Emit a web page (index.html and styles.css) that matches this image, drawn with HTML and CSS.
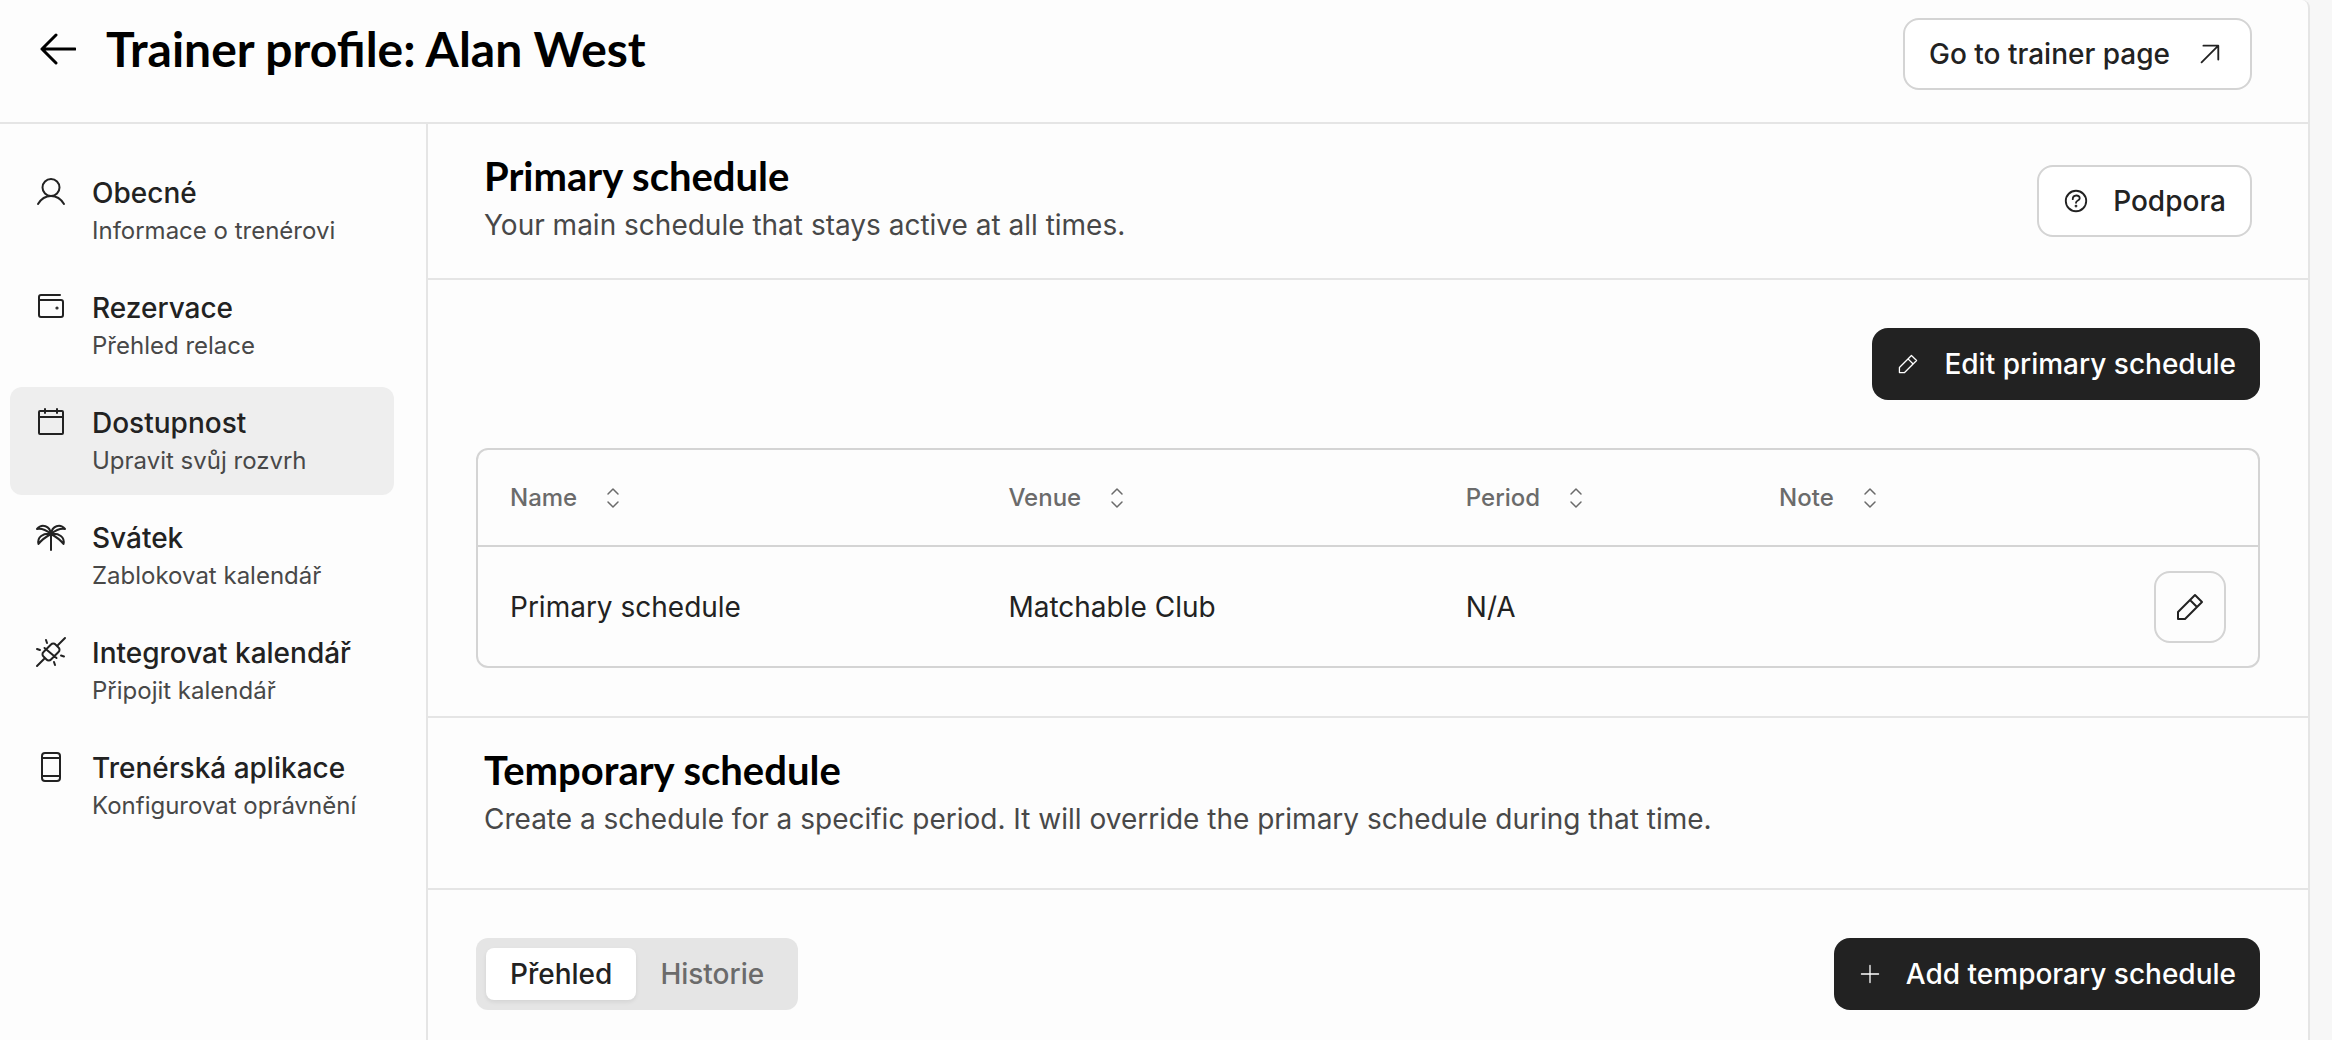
FILE: index.html
```html
<!DOCTYPE html>
<html lang="cs">
<head>
  <meta charset="UTF-8">
  <meta name="viewport" content="width=device-width, initial-scale=1.0">
  <title>Trainer profile</title>
  <link rel="stylesheet" href="styles.css">
</head>
<body>

<div class="panel">
  <header class="page-header">
    <div class="page-title">
      <button class="back" type="button" aria-label="Back">
        <svg class="icon-back" viewBox="0 0 36 32"><path d="M16 2 2 16l14 14M2 16h33"/></svg>
      </button>
      <h1>Trainer profile: Alan West</h1>
    </div>
    <a class="btn btn-trailing" href="#">
      Go to trainer page
      <svg class="icon" viewBox="0 0 28 28"><path d="M8 5h16v15M24 5 6 23"/></svg>
    </a>
  </header>

  <div class="layout">
    <nav class="sidebar">
      <a class="nav-item" href="#">
        <svg class="nav-icon" viewBox="0 0 32 32"><circle cx="16" cy="11.5" r="8.5"/><path d="M3 28c3-5 7-8 13-8s10 3 13 8"/></svg>
        <span class="nav-text"><span class="nav-title">Obecné</span><span class="nav-sub">Informace o trenérovi</span></span>
      </a>
      <a class="nav-item" href="#">
        <svg class="nav-icon" viewBox="0 0 32 32"><path d="M25 4H6a2 2 0 0 0-2 2v18a2 2 0 0 0 2 2h20a2 2 0 0 0 2-2V11a2 2 0 0 0-2-2H4"/><circle class="dot" cx="22" cy="17" r=".6"/></svg>
        <span class="nav-text"><span class="nav-title">Rezervace</span><span class="nav-sub">Přehled relace</span></span>
      </a>
      <a class="nav-item active" href="#">
        <svg class="nav-icon" viewBox="0 0 32 32"><rect x="4" y="5" width="24" height="23" rx="1"/><path d="M4 11h24M10 3v4M22 3v4"/></svg>
        <span class="nav-text"><span class="nav-title">Dostupnost</span><span class="nav-sub">Upravit svůj rozvrh</span></span>
      </a>
      <a class="nav-item" href="#">
        <svg class="nav-icon" viewBox="0 0 32 32"><path d="M16 13v16M16 13C15 5 7 2 2 8c5-1 9 1 14 5ZM16 13c1-8 9-11 14-5-5-1-9 1-14 5ZM16 13C8 12 2 16 3.500 23c3-4 7-7 12.500-10ZM16 13c8-1 14 3 12.500 10-3-4-7-7-12.500-10Z"/></svg>
        <span class="nav-text"><span class="nav-title">Svátek</span><span class="nav-sub">Zablokovat kalendář</span></span>
      </a>
      <a class="nav-item" href="#">
        <svg class="nav-icon" viewBox="0 0 32 32"><path d="M2 30l7-7M23 9l7-7M11 13.500l-2.500 2.500a3 3 0 0 0 0 4.500l3 3a3 3 0 0 0 4.500 0l7.500-7.500a3 3 0 0 0 0-4.500l-3-3a3 3 0 0 0-4.500 0ZM9.500 12 21.500 22M11 4l1 3M2 13l3 1M26 19.500l3 1M19 26l1 3"/></svg>
        <span class="nav-text"><span class="nav-title">Integrovat kalendář</span><span class="nav-sub">Připojit kalendář</span></span>
      </a>
      <a class="nav-item" href="#">
        <svg class="nav-icon" viewBox="0 0 32 32"><rect x="7" y="2" width="18" height="28" rx="3"/><path d="M7 7h18M7 25h18"/></svg>
        <span class="nav-text"><span class="nav-title">Trenérská aplikace</span><span class="nav-sub">Konfigurovat oprávnění</span></span>
      </a>
    </nav>

    <main class="content">
      <section class="section-head">
        <div>
          <h2>Primary schedule</h2>
          <p>Your main schedule that stays active at all times.</p>
        </div>
        <button class="btn" type="button">
          <svg class="icon" viewBox="0 0 28 28"><circle cx="14" cy="14" r="11"/><path d="M10.500 12c0-5 7.500-5 7.500-1 0 3-4 2-4 5"/><circle class="dot" cx="14" cy="19.500" r=".5"/></svg>
          Podpora
        </button>
      </section>

      <section class="section-body">
        <div class="actions actions-end">
          <button class="btn btn-dark" type="button">
            <svg class="icon" viewBox="0 0 28 28"><path d="M4 18 18 4l6 6-14 14H4ZM14 8l6 6"/></svg>
            Edit primary schedule
          </button>
        </div>

        <div class="table-wrap">
          <table>
            <colgroup>
              <col class="col-name">
              <col class="col-venue">
              <col class="col-period">
              <col>
              <col class="col-edit">
            </colgroup>
            <thead>
              <tr>
                <th><button class="sort" type="button">Name <svg class="icon-sort" viewBox="0 0 24 24"><path d="m7 8 5-5 5 5M7 16l5 5 5-5"/></svg></button></th>
                <th><button class="sort" type="button">Venue <svg class="icon-sort" viewBox="0 0 24 24"><path d="m7 8 5-5 5 5M7 16l5 5 5-5"/></svg></button></th>
                <th><button class="sort" type="button">Period <svg class="icon-sort" viewBox="0 0 24 24"><path d="m7 8 5-5 5 5M7 16l5 5 5-5"/></svg></button></th>
                <th><button class="sort" type="button">Note <svg class="icon-sort" viewBox="0 0 24 24"><path d="m7 8 5-5 5 5M7 16l5 5 5-5"/></svg></button></th>
                <th></th>
              </tr>
            </thead>
            <tbody>
              <tr>
                <td>Primary schedule</td>
                <td>Matchable Club</td>
                <td>N/A</td>
                <td></td>
                <td>
                  <button class="btn btn-square" type="button" aria-label="Edit">
                    <svg class="icon-edit" viewBox="0 0 28 28"><path d="M2 19 19 2l7 7L9 26H2ZM14 7l7 7"/></svg>
                  </button>
                </td>
              </tr>
            </tbody>
          </table>
        </div>
      </section>

      <section class="section-head section-head-plain">
        <div>
          <h2>Temporary schedule</h2>
          <p>Create a schedule for a specific period. It will override the primary schedule during that time.</p>
        </div>
      </section>

      <section class="section-body">
        <div class="actions">
          <div class="tabs" role="tablist">
            <button class="tab selected" type="button" role="tab" aria-selected="true">Přehled</button>
            <button class="tab" type="button" role="tab" aria-selected="false">Historie</button>
          </div>
          <button class="btn btn-dark" type="button">
            <svg class="icon" viewBox="0 0 28 28"><path d="M14 4v20M4 14h20"/></svg>
            Add temporary schedule
          </button>
        </div>
      </section>
    </main>
  </div>
</div>

</body>
</html>
```

FILE: styles.css
```css
* {
  box-sizing: border-box;
}

body {
  margin: 0;
  background: #f7f7f7;
  color: #222;
  font-family: Inter, "Liberation Sans", sans-serif;
  font-size: 28px;
  line-height: 40px;
}

h1, h2, p {
  margin: 0;
}

h1, h2 {
  color: #000;
  font-family: Lato, "Open Sans", sans-serif;
  font-weight: 700;
}

h1 {
  font-size: 48px;
  line-height: 62px;
}

h2 {
  font-size: 40px;
  line-height: 48px;
}

a {
  color: inherit;
  text-decoration: none;
}

button {
  font: inherit;
  color: inherit;
  cursor: pointer;
}

svg {
  display: block;
  flex: none;
  fill: none;
  stroke: currentColor;
  stroke-width: 2;
  stroke-linecap: round;
  stroke-linejoin: round;
}

.dot {
  fill: currentColor;
}

.panel {
  display: flex;
  flex-direction: column;
  height: 100vh;
  margin-right: 22px;
  overflow: hidden;
  background: #fdfdfd;
  border-right: 2px solid #e5e5e5;
  border-top-right-radius: 8px;
}

.page-header {
  display: flex;
  justify-content: space-between;
  align-items: flex-start;
  padding: 18px 56px 32px 40px;
  border-bottom: 2px solid #e5e5e5;
}

.page-title {
  display: flex;
  align-items: center;
  gap: 30px;
}

.back {
  padding: 0;
  border: 0;
  background: none;
  color: #000;
}

.icon-back {
  width: 36px;
  height: 32px;
  stroke-width: 3;
}

.layout {
  display: flex;
  flex: 1;
}

/* Sidebar */

.sidebar {
  display: flex;
  flex-direction: column;
  flex: none;
  gap: 7px;
  width: 428px;
  padding: 33px 32px 32px 10px;
  border-right: 2px solid #e5e5e5;
}

.nav-item {
  display: flex;
  gap: 25px;
  padding: 16px 0 16px 25px;
  border-radius: 12px;
}

.nav-item.active {
  background: #eee;
}

.nav-icon {
  width: 32px;
  height: 32px;
  margin-top: 3px;
}

.nav-text {
  display: flex;
  flex-direction: column;
}

.nav-title {
  font-weight: 500;
}

.nav-sub {
  color: #484848;
  font-size: 24px;
  line-height: 36px;
}

/* Content */

.content {
  flex: 1;
  min-width: 0;
}

.section-head {
  display: flex;
  justify-content: space-between;
  align-items: center;
  padding: 28px 56px;
  border-bottom: 2px solid #e5e5e5;
}

.section-head p {
  color: #484848;
  line-height: 50px;
}

.section-head-plain {
  padding-bottom: 44px;
  border-top: 2px solid #e5e5e5;
}

.section-body {
  display: flex;
  flex-direction: column;
  gap: 48px;
  padding: 48px;
}

.actions {
  display: flex;
  justify-content: space-between;
}

.actions-end {
  justify-content: flex-end;
}

.btn {
  display: flex;
  align-items: center;
  justify-content: center;
  gap: 24px;
  height: 72px;
  padding: 0 24px;
  border: 2px solid #d4d4d4;
  border-radius: 16px;
  background: #fff;
  font-weight: 500;
}

.btn-trailing {
  gap: 26px;
  padding-right: 28px;
}

.btn-dark {
  border: 0;
  background: #222;
  color: #fff;
}

.btn-square {
  width: 72px;
  padding: 0;
  background: none;
}

.icon {
  width: 26px;
  height: 26px;
}

.btn-dark .icon {
  width: 24px;
  height: 24px;
  stroke-width: 1.5;
}

.icon-edit {
  width: 28px;
  height: 28px;
}

/* Table */

.table-wrap {
  border: 2px solid #d4d4d4;
  border-radius: 12px;
}

table {
  width: 100%;
  table-layout: fixed;
  border-collapse: collapse;
}

.col-name {
  width: 28%;
}

.col-venue {
  width: 25.7%;
}

.col-period {
  width: 17.6%;
}

.col-edit {
  width: 136px;
}

th {
  height: 96px;
  padding: 0 32px;
  border-bottom: 2px solid #d4d4d4;
  text-align: left;
}

td {
  height: 120px;
  padding: 0 32px;
}

.sort {
  display: flex;
  align-items: center;
  gap: 24px;
  padding: 0;
  border: 0;
  background: none;
  color: #6b6b6b;
  font-size: 24px;
  font-weight: 500;
}

.icon-sort {
  width: 24px;
  height: 24px;
  stroke-width: 1.5;
}

/* Tabs */

.tabs {
  display: flex;
  padding: 10px;
  border-radius: 12px;
  background: #e5e5e5;
}

.tab {
  padding: 0 24px;
  border: 0;
  border-radius: 8px;
  background: none;
  color: #6b6b6b;
  font-weight: 500;
}

.tab.selected {
  background: #fff;
  box-shadow: 0 2px 4px rgba(0, 0, 0, 0.08);
  color: #222;
}
```
